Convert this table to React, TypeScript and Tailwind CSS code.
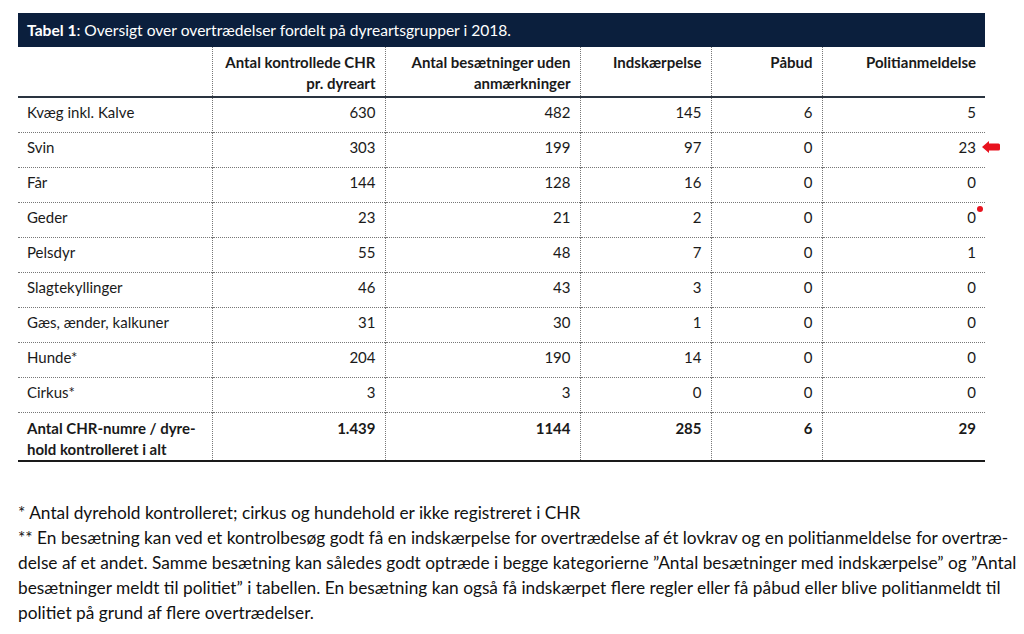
import React from "react";

const rows: [string, string, string, string, string, string][] = [
  ["Kvæg inkl. Kalve", "630", "482", "145", "6", "5"],
  ["Svin", "303", "199", "97", "0", "23"],
  ["Får", "144", "128", "16", "0", "0"],
  ["Geder", "23", "21", "2", "0", "0"],
  ["Pelsdyr", "55", "48", "7", "0", "1"],
  ["Slagtekyllinger", "46", "43", "3", "0", "0"],
  ["Gæs, ænder, kalkuner", "31", "30", "1", "0", "0"],
  ["Hunde*", "204", "190", "14", "0", "0"],
  ["Cirkus*", "3", "3", "0", "0", "0"],
];

export default function App() {
  return (
    <div
      className="w-[1024px] h-[634px] bg-white text-[#1a1a1a] overflow-hidden"
      style={{ fontFamily: "Lato, 'Open Sans', sans-serif" }}
    >
      <div className="pt-[13px] pl-[18px]">
        <div className="w-[967px] h-[34px] bg-[#0b1f3d] text-white text-[15.6px] leading-[34px] pl-[9px]">
          <span className="font-bold">Tabel 1</span>: Oversigt over overtrædelser fordelt på dyreartsgrupper i 2018.
        </div>
        <table className="table-fixed border-collapse w-[967px] text-[15px]">
          <colgroup>
            <col className="w-[194px]" />
            <col className="w-[173px]" />
            <col className="w-[195px]" />
            <col className="w-[131px]" />
            <col className="w-[111px]" />
            <col className="w-[163px]" />
          </colgroup>
          <thead>
            <tr className="h-[50px] border-b-2 border-[#2a3440] font-bold leading-[21px]">
              <th className="border-r border-dotted border-[#777]"></th>
              <th className="border-r border-dotted border-[#777] text-right align-top pt-[5px] pr-[9px] font-bold">
                Antal kontrollede CHR
                <br />
                pr. dyreart
              </th>
              <th className="border-r border-dotted border-[#777] text-right align-top pt-[5px] pr-[9px] font-bold">
                Antal besætninger uden
                <br />
                anmærkninger
              </th>
              <th className="border-r border-dotted border-[#777] text-right align-top pt-[5px] pr-[9px] font-bold">
                Indskærpelse
              </th>
              <th className="border-r border-dotted border-[#777] text-right align-top pt-[5px] pr-[9px] font-bold">
                Påbud
              </th>
              <th className="text-right align-top pt-[5px] pr-[9px] font-bold">Politianmeldelse</th>
            </tr>
          </thead>
          <tbody>
            {rows.map((r, i) => (
              <tr key={i} className="h-[35px] border-b border-dotted border-[#777] leading-[21px]">
                <td className="border-r border-dotted border-[#777] align-top pt-[4px] pl-[9px]">{r[0]}</td>
                <td className="border-r border-dotted border-[#777] align-top pt-[4px] pr-[9px] text-right">{r[1]}</td>
                <td className="border-r border-dotted border-[#777] align-top pt-[4px] pr-[9px] text-right">{r[2]}</td>
                <td className="border-r border-dotted border-[#777] align-top pt-[4px] pr-[9px] text-right">{r[3]}</td>
                <td className="border-r border-dotted border-[#777] align-top pt-[4px] pr-[9px] text-right">{r[4]}</td>
                <td className="align-top pt-[4px] pr-[9px] text-right relative">
                  {r[5]}
                  {i === 1 && (
                    <svg
                      className="absolute left-[159px] top-[8px]"
                      width="18"
                      height="12"
                      viewBox="0 0 18 12"
                    >
                      <path d="M0 6 L7 0 L7 2.5 L16.5 2.5 Q18 2.5 18 4 L18 8 Q18 9.5 16.5 9.5 L7 9.5 L7 12 Z" fill="#e8121e" />
                    </svg>
                  )}
                  {i === 3 && (
                    <span className="absolute left-[154px] top-[3px] w-[6px] h-[6px] rounded-full bg-[#e8121e]" />
                  )}
                </td>
              </tr>
            ))}
            <tr className="h-[49px] border-b-2 border-[#1a1a1a] font-bold leading-[21px]">
              <td className="border-r border-dotted border-[#777] align-top pt-[5px] pl-[9px]">
                Antal CHR-numre / dyre-
                <br />
                hold kontrolleret i alt
              </td>
              <td className="border-r border-dotted border-[#777] align-top pt-[5px] pr-[9px] text-right">1.439</td>
              <td className="border-r border-dotted border-[#777] align-top pt-[5px] pr-[9px] text-right">1144</td>
              <td className="border-r border-dotted border-[#777] align-top pt-[5px] pr-[9px] text-right">285</td>
              <td className="border-r border-dotted border-[#777] align-top pt-[5px] pr-[9px] text-right">6</td>
              <td className="align-top pt-[5px] pr-[9px] text-right">29</td>
            </tr>
          </tbody>
        </table>
        <div className="mt-[38px] text-[17.3px] leading-[25px] text-[#111] whitespace-nowrap">
          * Antal dyrehold kontrolleret; cirkus og hundehold er ikke registreret i CHR
          <br />
          ** En besætning kan ved et kontrolbesøg godt få en indskærpelse for overtrædelse af ét lovkrav og en politianmeldelse for overtræ-
          <br />
          delse af et andet. Samme besætning kan således godt optræde i begge kategorierne ”Antal besætninger med indskærpelse” og ”Antal
          <br />
          besætninger meldt til politiet” i tabellen. En besætning kan også få indskærpet flere regler eller få påbud eller blive politianmeldt til
          <br />
          politiet på grund af flere overtrædelser.
        </div>
      </div>
    </div>
  );
}
